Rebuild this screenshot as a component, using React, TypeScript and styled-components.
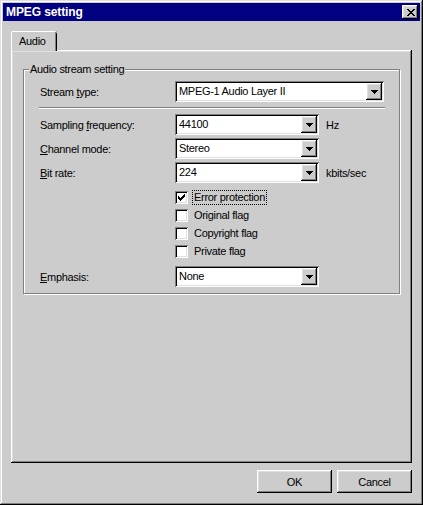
import React from 'react';
import styled, { createGlobalStyle } from 'styled-components';

const FACE = '#cccccc';
const LIGHT = '#dfdfdf';
const SHADOW = '#808080';

const raised = `inset -1px -1px #000, inset 1px 1px #fff, inset -2px -2px ${SHADOW}, inset 2px 2px ${LIGHT}`;
const sunken = `inset 1px 1px ${SHADOW}, inset -1px -1px #fff, inset 2px 2px #000, inset -2px -2px ${LIGHT}`;

// turns a little bitmap ("X" = black pixel) into an svg path
const pixelPath = (rows: string[]) =>
  rows
    .flatMap((row, y) =>
      row.split('').map((c, x) => (c === 'X' ? `M${x} ${y}h1v1h-1z` : ''))
    )
    .join('');

const CLOSE_GLYPH = ['XX    XX', ' XX  XX ', '  XXXX  ', '   XX   ', '  XXXX  ', ' XX  XX ', 'XX    XX'];
const ARROW_GLYPH = ['XXXXXXX', ' XXXXX ', '  XXX  ', '   X   '];
const CHECK_GLYPH = ['      X', '     XX', 'X   XXX', 'XX XXX ', 'XXXXX  ', ' XXX   ', '  X    '];

const Glyph: React.FC<{ rows: string[] }> = ({ rows }) => (
  <svg
    width={rows[0].length}
    height={rows.length}
    viewBox={`0 0 ${rows[0].length} ${rows.length}`}
    shapeRendering="crispEdges"
  >
    <path d={pixelPath(rows)} fill="#000" />
  </svg>
);

const GlobalStyle = createGlobalStyle`
  html, body {
    margin: 0;
    padding: 0;
    background: ${FACE};
  }
  body {
    font-family: 'Liberation Sans', Arial, sans-serif;
    font-size: 11px;
    letter-spacing: -0.3px;
    color: #000;
  }
`;

const Window = styled.div`
  width: 423px;
  height: 505px;
  box-sizing: border-box;
  padding: 3px;
  display: flex;
  flex-direction: column;
  background: ${FACE};
  box-shadow: inset -1px -1px #000, inset 1px 1px ${LIGHT}, inset -2px -2px ${SHADOW},
    inset 2px 2px #fff;
`;

const TitleBar = styled.div`
  flex: none;
  height: 18px;
  display: flex;
  align-items: center;
  justify-content: space-between;
  padding: 0 2px 0 3px;
  background: #000080;
  color: #fff;
`;

const TitleText = styled.span`
  font-size: 12px;
  font-weight: bold;
  letter-spacing: -0.1px;
`;

const CloseButton = styled.div`
  width: 16px;
  height: 14px;
  display: flex;
  align-items: center;
  justify-content: center;
  padding-left: 1px;
  box-sizing: border-box;
  background: ${FACE};
  box-shadow: ${raised};
`;

const Body = styled.div`
  flex: 1;
  display: flex;
  flex-direction: column;
  padding: 10px 8px 9px;
`;

const TabStrip = styled.div`
  display: flex;
`;

const Tab = styled.div`
  position: relative;
  z-index: 1;
  width: 46px;
  height: 20px;
  margin-bottom: -1px;
  box-sizing: border-box;
  display: flex;
  align-items: center;
  padding: 0 0 1px 8px;
  background: ${FACE};
  border-radius: 2px 2px 0 0;
  box-shadow: inset 1px 0 #fff, inset 0 1px #fff, inset -1px 0 #000, inset -2px 0 ${SHADOW};
`;

const Panel = styled.div`
  height: 413px;
  box-sizing: border-box;
  padding: 19px 12px;
  box-shadow: ${raised};
`;

const GroupBox = styled.div`
  position: relative;
  display: flex;
  flex-direction: column;
  padding: 11px 14px 6px 16px;
  border: 1px solid ${SHADOW};
  box-shadow: inset 1px 1px #fff, 1px 1px #fff;
`;

const Legend = styled.span`
  position: absolute;
  top: -7px;
  left: 5px;
  padding: 0 1px;
  line-height: 13px;
  background: ${FACE};
`;

const FieldRow = styled.div<{ $top?: number }>`
  display: flex;
  align-items: center;
  height: 21px;
  margin-top: ${(p) => p.$top ?? 0}px;
`;

const Label = styled.span`
  flex: none;
  width: 135px;
`;

const Key = styled.span`
  text-decoration: underline;
  text-underline-offset: 1px;
`;

const Combo = styled.div<{ $wide?: boolean }>`
  display: flex;
  width: ${(p) => (p.$wide ? '209px' : '144px')};
  height: 21px;
  box-sizing: border-box;
  padding: 2px;
  background: #fff;
  box-shadow: ${sunken};
`;

const ComboValue = styled.span`
  flex: 1;
  padding-left: 2px;
  line-height: 17px;
  white-space: nowrap;
  overflow: hidden;
`;

const DropButton = styled.div`
  flex: none;
  width: 16px;
  height: 17px;
  display: flex;
  align-items: center;
  justify-content: center;
  background: ${FACE};
  box-shadow: ${raised};
`;

const Unit = styled.span`
  margin-left: 7px;
`;

const Separator = styled.div`
  height: 0;
  margin: 5px 0 5px -1px;
  border-top: 1px solid ${SHADOW};
  border-bottom: 1px solid #fff;
`;

const CheckList = styled.div`
  display: flex;
  flex-direction: column;
  gap: 5px;
  margin: 8px 0 0 135px;
`;

const CheckRow = styled.div`
  display: flex;
  align-items: center;
  height: 13px;
`;

const CheckBox = styled.div`
  flex: none;
  width: 13px;
  height: 13px;
  box-sizing: border-box;
  display: flex;
  align-items: center;
  justify-content: center;
  background: #fff;
  box-shadow: ${sunken};
`;

const CheckLabel = styled.span<{ $focused?: boolean }>`
  margin-left: 4px;
  padding: 0 1px;
  line-height: 13px;
  border: 1px dotted ${(p) => (p.$focused ? '#000' : 'transparent')};
`;

const ButtonRow = styled.div`
  display: flex;
  justify-content: flex-end;
  gap: 5px;
  margin-top: 7px;
`;

const Button = styled.div`
  width: 75px;
  height: 23px;
  display: flex;
  align-items: center;
  justify-content: center;
  background: ${FACE};
  box-shadow: ${raised};
`;

const Select: React.FC<{ value: string; wide?: boolean }> = ({ value, wide }) => (
  <Combo $wide={wide}>
    <ComboValue>{value}</ComboValue>
    <DropButton>
      <Glyph rows={ARROW_GLYPH} />
    </DropButton>
  </Combo>
);

const Check: React.FC<{ label: string; checked?: boolean; focused?: boolean }> = ({
  label,
  checked,
  focused,
}) => (
  <CheckRow>
    <CheckBox>{checked && <Glyph rows={CHECK_GLYPH} />}</CheckBox>
    <CheckLabel $focused={focused}>{label}</CheckLabel>
  </CheckRow>
);

const App: React.FC = () => (
  <>
    <GlobalStyle />
    <Window>
      <TitleBar>
        <TitleText>MPEG setting</TitleText>
        <CloseButton>
          <Glyph rows={CLOSE_GLYPH} />
        </CloseButton>
      </TitleBar>
      <Body>
        <TabStrip>
          <Tab>Audio</Tab>
        </TabStrip>
        <Panel>
          <GroupBox>
            <Legend>Audio stream setting</Legend>
            <FieldRow>
              <Label>
                Stream <Key>t</Key>ype:
              </Label>
              <Select value="MPEG-1 Audio Layer II" wide />
            </FieldRow>
            <Separator />
            <FieldRow>
              <Label>
                Sampling <Key>f</Key>requency:
              </Label>
              <Select value="44100" />
              <Unit>Hz</Unit>
            </FieldRow>
            <FieldRow $top={3}>
              <Label>
                <Key>C</Key>hannel mode:
              </Label>
              <Select value="Stereo" />
            </FieldRow>
            <FieldRow $top={3}>
              <Label>
                <Key>B</Key>it rate:
              </Label>
              <Select value="224" />
              <Unit>kbits/sec</Unit>
            </FieldRow>
            <CheckList>
              <Check label="Error protection" checked focused />
              <Check label="Original flag" />
              <Check label="Copyright flag" />
              <Check label="Private flag" />
            </CheckList>
            <FieldRow $top={8}>
              <Label>
                <Key>E</Key>mphasis:
              </Label>
              <Select value="None" />
            </FieldRow>
          </GroupBox>
        </Panel>
        <ButtonRow>
          <Button>OK</Button>
          <Button>Cancel</Button>
        </ButtonRow>
      </Body>
    </Window>
  </>
);

export default App;
